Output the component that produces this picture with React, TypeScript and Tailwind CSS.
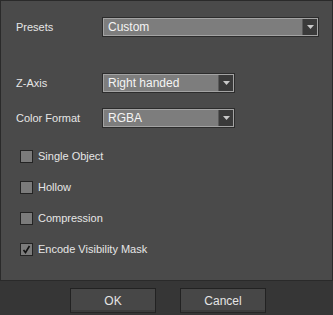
import React from 'react';

interface SelectProps {
  value: string;
  width: string;
}

function Select({ value, width }: SelectProps) {
  return (
    <div className={`${width} h-[20px] border border-[#2c2c2c] bg-[#2c2c2c]`}>
      <div className="flex h-full border border-[#a3a3a3] bg-[#7d7d7d]">
        <span className="flex-1 pl-[4px] leading-[16px] text-[12px] text-[#f4f4f4]">{value}</span>
        <div className="flex w-[15px] items-center justify-center border-l border-[#5a5a5a] bg-[#3a3a3a]">
          <svg width="7" height="4" viewBox="0 0 7 4">
            <path d="M0 0H7L3.5 4Z" fill="#c8c8c8" />
          </svg>
        </div>
      </div>
    </div>
  );
}

function Check({ label, checked }: { label: string; checked?: boolean }) {
  return (
    <div className="flex h-[13px] items-center gap-[5px]">
      <div className="flex h-[13px] w-[13px] items-center justify-center border border-[#232323] bg-[#7b7b7b]">
        {checked && (
          <svg width="9" height="9" viewBox="0 0 9 9">
            <path d="M1.5 5L3.5 7.5L7.5 1" stroke="#111" strokeWidth="1.6" fill="none" />
          </svg>
        )}
      </div>
      <span className="text-[11px] text-[#e6e6e6]">{label}</span>
    </div>
  );
}

export default function App() {
  return (
    <div
      className="flex h-[315px] w-[333px] flex-col bg-[#363636]"
      style={{ fontFamily: '"Liberation Sans", Arial, sans-serif' }}
    >
      <div className="h-[281px] border border-[#2a2a2a] bg-[#4a4a4a] pt-[16px]">
        <div className="flex h-[20px] items-center">
          <span className="w-[101px] pl-[15px] text-[11px] text-[#e6e6e6]">Presets</span>
          <Select value="Custom" width="w-[217px]" />
        </div>

        <div className="mt-[36px] flex h-[20px] items-center">
          <span className="w-[101px] pl-[15px] text-[11px] text-[#e6e6e6]">Z-Axis</span>
          <Select value="Right handed" width="w-[133px]" />
        </div>

        <div className="mt-[15px] flex h-[20px] items-center">
          <span className="w-[101px] pl-[15px] text-[11px] text-[#e6e6e6]">Color Format</span>
          <Select value="RGBA" width="w-[133px]" />
        </div>

        <div className="mt-[22px] flex flex-col gap-[18px] pl-[19px]">
          <Check label="Single Object" />
          <Check label="Hollow" />
          <Check label="Compression" />
          <Check label="Encode Visibility Mask" checked />
        </div>
      </div>

      <div className="flex gap-[24px] pl-[70px] pt-[7px]">
        {['OK', 'Cancel'].map((t) => (
          <button
            key={t}
            className="h-[25px] w-[86px] border border-[#222] border-b-[#262626] bg-[#474747] text-[12px] text-[#e4e4e4] shadow-[inset_0_-2px_0_#3c3c3c]"
          >
            {t}
          </button>
        ))}
      </div>
    </div>
  );
}
